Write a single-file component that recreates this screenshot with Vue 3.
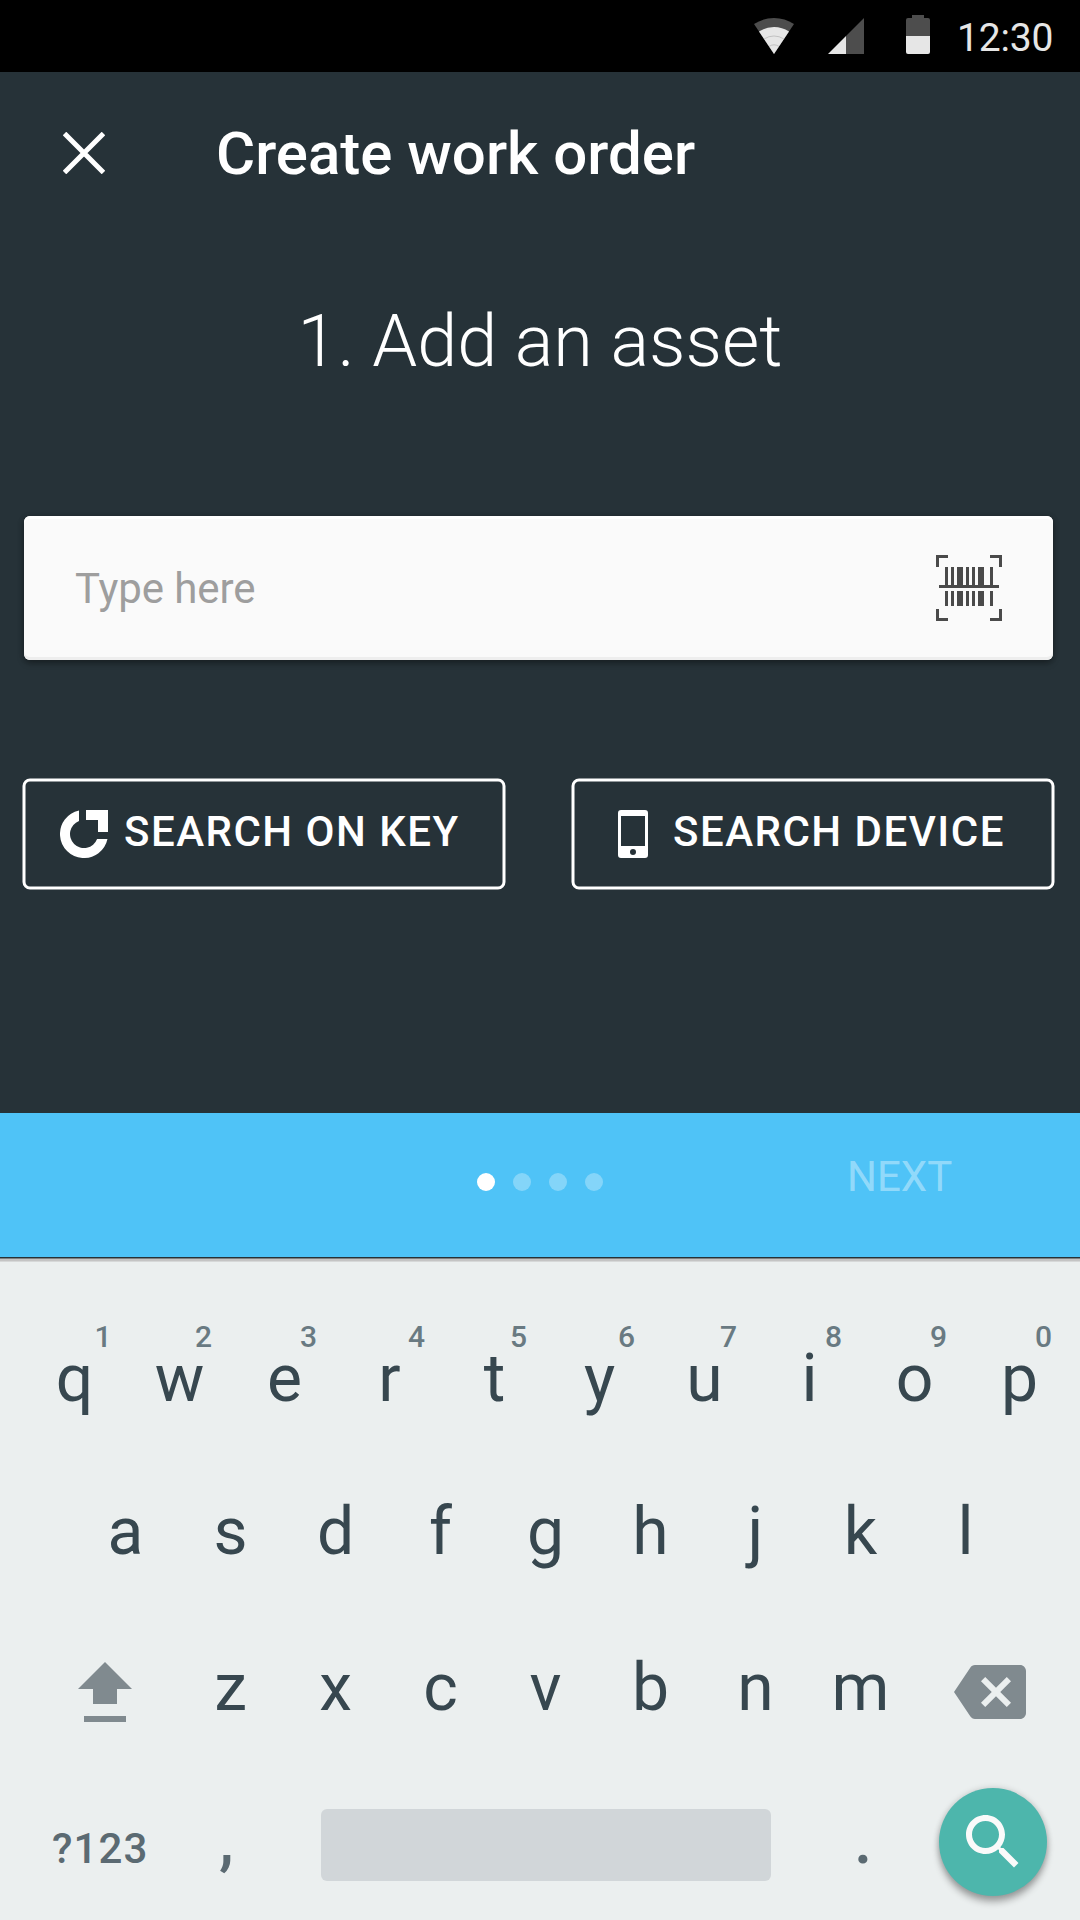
<script setup>
const topRow = [
  { label: 'q', hint: '1', shift: 28.5 },
  { label: 'w', hint: '2', shift: 24 },
  { label: 'e', hint: '3', shift: 24 },
  { label: 'r', hint: '4', shift: 27 },
  { label: 't', hint: '5', shift: 24 },
  { label: 'y', hint: '6', shift: 27 },
  { label: 'u', hint: '7', shift: 24 },
  { label: 'i', hint: '8', shift: 24 },
  { label: 'o', hint: '9', shift: 24 },
  { label: 'p', hint: '0', shift: 24 }
]
const middleRow = ['a', 's', 'd', 'f', 'g', 'h', 'j', 'k', 'l']
const lowerRow = ['z', 'x', 'c', 'v', 'b', 'n', 'm']
const steps = 4
const currentStep = 1
</script>

<template>
  <div class="screen">
    <header class="status">
      <svg class="wifi" width="40" height="36" viewBox="0 0 40 36">
        <path d="M20 36L0 6.07A36 36 0 0 1 40 6.07Z" fill="#4d4d4d" />
        <path d="M20 36L5 13.55A27 27 0 0 1 35 13.55Z" fill="#e6e6e6" />
        <path d="M10.2 20.9A18 18 0 0 1 29.8 20.9M15.1 28.4A9 9 0 0 1 24.9 28.4" fill="none" stroke="#b8b8b8" stroke-width=".8" />
      </svg>
      <svg class="signal" width="36" height="36" viewBox="0 0 36 36">
        <path d="M36 0V36H18V18Z" fill="#4d4d4d" />
        <path d="M18 18V36H0Z" fill="#e6e6e6" />
      </svg>
      <svg class="battery" width="24" height="39" viewBox="0 0 24 39">
        <path d="M6 0H18V3H22A2 2 0 0 1 24 5V21H0V5A2 2 0 0 1 2 3H6Z" fill="#4d4d4d" />
        <path d="M0 21H24V37A2 2 0 0 1 22 39H2A2 2 0 0 1 0 37Z" fill="#e6e6e6" />
      </svg>
      <span class="clock">12:30</span>
    </header>

    <main class="content">
      <div class="toolbar">
        <svg class="close" width="42" height="42" viewBox="0 0 42 42">
          <path d="M1.5 1.5L40.5 40.5M40.5 1.5L1.5 40.5" stroke="#fff" stroke-width="5" />
        </svg>
        <h1>Create work order</h1>
      </div>
      <h2>1. Add an asset</h2>
      <div class="field">
        <span class="placeholder">Type here</span>
        <svg width="66" height="66" viewBox="0 0 66 66" fill="#4a4a4a">
          <path d="M0 0H12V3H3V12H0ZM54 0H66V12H63V3H54ZM0 54H3V63H12V66H0ZM63 54H66V66H54V63H63Z" />
          <path d="M3 30H63V33H3Z" />
          <path d="M9 12h3v18h-3zM15 12h3v18h-3zM21 12h6v18h-6zM30 12h3v18h-3zM36 12h3v18h-3zM42 12h6v18h-6zM54 12h3v18h-3z" />
          <path d="M9 36h3v15h-3zM15 36h3v15h-3zM21 36h6v15h-6zM30 36h3v15h-3zM36 36h3v15h-3zM42 36h6v15h-6zM54 36h3v15h-3z" />
        </svg>
      </div>
      <div class="actions">
        <button class="action key-action">
          <svg class="outline" width="484" height="112" viewBox="0 0 484 112">
            <rect x="2" y="2" width="480" height="108" rx="6" fill="none" stroke="#fff" stroke-width="3" />
          </svg>
          <svg class="glyph" width="48" height="48" viewBox="0 0 48 48" fill="#fff">
            <path d="M26 0H48V22H38V10H26Z" />
            <path d="M19 .53A24 24 0 1 0 47.47 29H37.08A14 14 0 1 1 19 10.92Z" />
          </svg>
          <span>SEARCH ON KEY</span>
        </button>
        <button class="action device-action">
          <svg class="outline" width="484" height="112" viewBox="0 0 484 112">
            <rect x="2" y="2" width="480" height="108" rx="6" fill="none" stroke="#fff" stroke-width="3" />
          </svg>
          <svg class="glyph" width="30" height="48" viewBox="0 0 30 48">
            <path fill="#fff" fill-rule="evenodd" d="M3 0H27A3 3 0 0 1 30 3V45A3 3 0 0 1 27 48H3A3 3 0 0 1 0 45V3A3 3 0 0 1 3 0ZM3 6V36H27V6ZM15 39A3 3 0 1 0 15 45A3 3 0 1 0 15 39Z" />
          </svg>
          <span>SEARCH DEVICE</span>
        </button>
      </div>
    </main>

    <nav class="stepper">
      <div class="dots">
        <i v-for="n in steps" :key="n" :class="{ active: n === currentStep }"></i>
      </div>
      <span class="next">NEXT</span>
    </nav>

    <section class="keyboard">
      <div class="row first">
        <span v-for="k in topRow" :key="k.label" class="key">
          {{ k.label }}<sup class="hint" :style="{ left: 52.5 + k.shift + 'px' }">{{ k.hint }}</sup>
        </span>
      </div>
      <div class="row second">
        <span v-for="k in middleRow" :key="k" class="key">{{ k }}</span>
      </div>
      <div class="row third">
        <svg class="shift" width="54" height="60" viewBox="0 0 54 60" fill="#808a8f">
          <path d="M27 0L54 27H39V42H15V27H0ZM6 54H48V60H6Z" />
        </svg>
        <span v-for="k in lowerRow" :key="k" class="key">{{ k }}</span>
        <svg class="erase" width="72" height="72" viewBox="0 0 24 24" fill="#808a8f">
          <path d="M22 3H7c-.69 0-1.23.35-1.59.88L0 12l5.41 8.11c.36.53.9.89 1.59.89h15c1.1 0 2-.9 2-2V5c0-1.1-.9-2-2-2zm-3 12.59L17.59 17 14 13.41 10.41 17 9 15.59 12.59 12 9 8.41 10.41 7 14 10.59 17.59 7 19 8.41 15.41 12 19 15.59z" />
        </svg>
      </div>
      <div class="row fourth">
        <span class="symbols">?123</span>
        <span class="mark comma">,</span>
        <span class="space"></span>
        <span class="mark period">.</span>
        <span class="search">
          <svg width="72" height="72" viewBox="0 0 24 24" fill="#fafafa">
            <path d="M15.5 14h-.79l-.28-.27C15.41 12.59 16 11.11 16 9.5 16 5.91 13.09 3 9.5 3S3 5.91 3 9.5 5.91 16 9.5 16c1.61 0 3.09-.59 4.23-1.57l.27.28v.79l5 4.99L20.49 19l-4.99-5zm-6 0C7.01 14 5 11.99 5 9.5S7.01 5 9.5 5 14 7.01 14 9.5 11.99 14 9.5 14z" />
          </svg>
        </span>
      </div>
    </section>
  </div>
</template>

<style>
body {
  margin: 0;
}
</style>

<style scoped>
.screen {
  width: 1080px;
  height: 1920px;
  display: flex;
  flex-direction: column;
  overflow: hidden;
  background: #263238;
  font-family: Roboto, "Liberation Sans", sans-serif;
  color: #fff;
}
svg {
  display: block;
  flex: none;
}
.status {
  box-sizing: border-box;
  height: 72px;
  flex: none;
  display: flex;
  align-items: flex-start;
  padding-left: 754px;
  background: #000;
}
.wifi,
.signal {
  margin-top: 18px;
}
.signal {
  margin-left: 34px;
}
.battery {
  margin: 15px 0 0 42px;
}
.clock {
  margin-left: 27px;
  font-size: 39px;
  line-height: 76px;
  letter-spacing: -.2px;
  color: #e6e6e6;
}
.content {
  height: 1041px;
  flex: none;
}
.toolbar {
  display: flex;
  align-items: center;
  height: 162px;
  padding-left: 63px;
}
h1,
h2 {
  margin: 0;
}
h1 {
  margin-left: 111px;
  padding-top: 2px;
  font-size: 60px;
  line-height: 70px;
  font-weight: 500;
}
h2 {
  margin-top: 66px;
  font-size: 72px;
  line-height: 84px;
  font-weight: 300;
  text-align: center;
}
.field {
  box-sizing: border-box;
  width: 1029px;
  height: 144px;
  margin: 132px 0 0 24px;
  padding: 0 51px 0 51px;
  display: flex;
  align-items: center;
  justify-content: space-between;
  border-radius: 6px;
  background: #fafafa;
  box-shadow: 0 3px 6px rgba(0, 0, 0, .35), 0 0 6px rgba(0, 0, 0, .12), inset 0 3px 0 #fff, inset 0 -3px 0 #eee;
}
.placeholder {
  padding-top: 2px;
  font-size: 42px;
  line-height: 50px;
  letter-spacing: -.1px;
  color: #9e9e9e;
}
.actions {
  display: flex;
  gap: 65px;
  margin: 118px 0 0 22px;
}
.action {
  position: relative;
  display: flex;
  align-items: flex-start;
  box-sizing: border-box;
  width: 484px;
  height: 112px;
  padding: 32px 0 0 38px;
  border: 0;
  background: none;
  color: #fff;
  font: 500 42px/50px Roboto, "Liberation Sans", sans-serif;
  letter-spacing: 1.5px;
  white-space: nowrap;
}
.action span {
  margin: -3px 0 0 16px;
}
.device-action {
  padding-left: 47px;
}
.device-action span {
  margin-left: 25px;
}
.outline {
  position: absolute;
  inset: 0;
}
.stepper {
  height: 144px;
  flex: none;
  display: flex;
  align-items: center;
  background: #4fc3f7;
}
.dots {
  display: flex;
  gap: 18px;
  margin: -6px 0 0 477px;
}
.dots i {
  width: 18px;
  height: 18px;
  border-radius: 50%;
  background: rgba(255, 255, 255, .3);
}
.dots i.active {
  background: #fff;
}
.next {
  margin: -16px 0 0 244px;
  font-size: 42px;
  line-height: 50px;
  color: rgba(255, 255, 255, .4);
}
.keyboard {
  box-sizing: border-box;
  height: 663px;
  flex: none;
  padding-top: 63px;
  background: linear-gradient(#263238 0 1px, #7d8080 1px 2px, #c4c4c4 2px 4px, #d6d8d8 4px 5px, #ebefef 5px);
}
.row {
  display: flex;
  color: #37474f;
  font-size: 66px;
  line-height: 78px;
}
.key {
  position: relative;
  width: 105px;
  flex: none;
  margin-top: 20px;
  text-align: center;
}
.first {
  height: 153px;
  padding: 0 22px;
}
.second {
  height: 156px;
  padding: 0 73px;
}
.third {
  height: 153px;
}
.hint {
  position: absolute;
  top: -21px;
  transform: translateX(-50%);
  font-size: 30px;
  line-height: 36px;
  font-weight: 500;
  color: #697a82;
}
.shift {
  margin: 33px 46px 0 78px;
}
.erase {
  margin: 27px 0 0 41px;
}
.fourth {
  color: #5b6a72;
}
.symbols {
  width: 106px;
  margin: 42px 0 0 52px;
  font-size: 42px;
  line-height: 50px;
  font-weight: 500;
  letter-spacing: 1.1px;
}
.mark {
  margin-top: 20px;
  font-weight: 500;
}
.comma {
  width: 102px;
  margin-left: 61px;
}
.space {
  width: 450px;
  height: 72px;
  margin-top: 27px;
  border-radius: 6px;
  background: #d1d6d9;
}
.period {
  width: 85px;
  margin-left: 83px;
}
.search {
  box-sizing: border-box;
  width: 108px;
  height: 108px;
  margin-top: 6px;
  padding: 18px;
  border-radius: 50%;
  background: #4db6ac;
  box-shadow: 0 6px 7px rgba(0, 0, 0, .3), 0 0 6px rgba(0, 0, 0, .16);
}
</style>
